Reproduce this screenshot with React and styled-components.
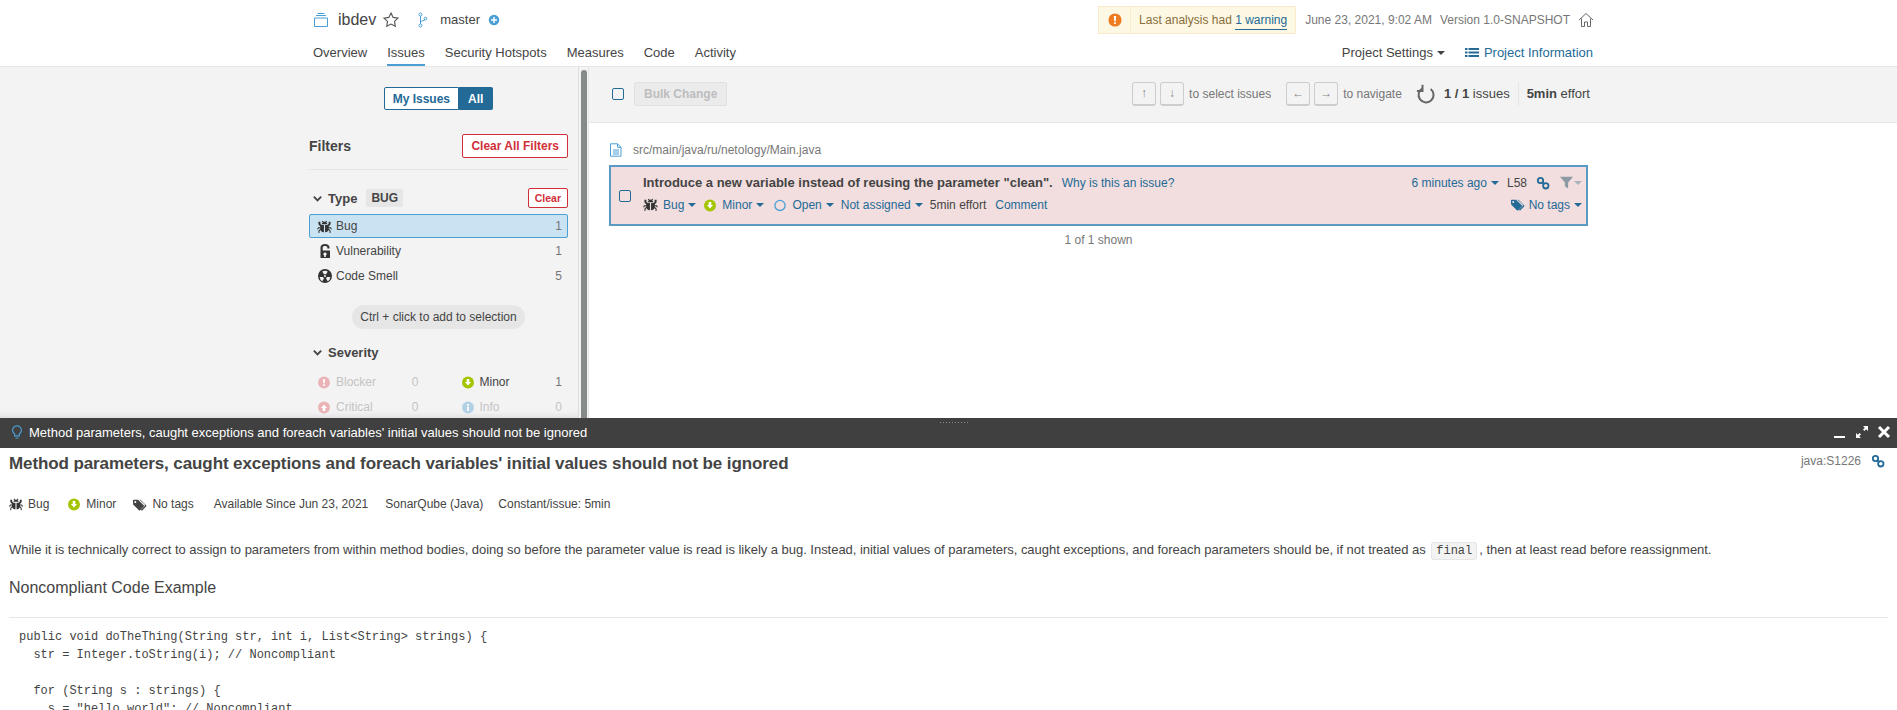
import React from "react";
import styled, {createGlobalStyle} from "styled-components";

const GlobalStyle = createGlobalStyle`
	html, body {
		margin: 0;
		padding: 0;
		background: #fff;
	}
	body {
		font-family: "Liberation Sans", Arial, sans-serif;
		font-size: 12px;
		color: #444;
	}
	* {
		box-sizing: border-box;
	}
`;

const Page = styled.div`
	width: 1897px;
	height: 710px;
	overflow: hidden;
	display: flex;
	flex-direction: column;
`;

/* ---------- top navigation ---------- */
const TopNav = styled.header`
	height: 67px;
	flex: none;
	padding: 0 303px 0 309px;
	background: #fff;
	border-bottom: 1px solid #e6e6e6;
	display: flex;
	flex-direction: column;
`;

const TopRow = styled.div`
	height: 40px;
	display: flex;
	align-items: center;
	justify-content: space-between;
`;

const Breadcrumb = styled.div`
	display: flex;
	align-items: center;
	padding-left: 4px;
`;

const ProjectName = styled.span`
	font-size: 16px;
	margin-left: 9px;
	color: #444;
`;

const StarWrap = styled.span`
	margin-left: 6px;
`;

const BranchWrap = styled.span`
	margin-left: 16px;
`;

const PlusWrap = styled.span`
	margin-left: 8px;
`;

const BranchName = styled.span`
	font-size: 13px;
	margin-left: 8px;
	color: #444;
`;

const Meta = styled.div`
	display: flex;
	align-items: center;
	color: #777;
	font-size: 12px;
`;

const WarningBox = styled.div`
	height: 28px;
	display: flex;
	align-items: center;
	background: #fcf8e3;
	border: 1px solid #faebcc;
	color: #8a6d3b;
	margin-right: 9px;
`;

const WarningIcon = styled.div`
	width: 32px;
	height: 26px;
	display: flex;
	align-items: center;
	justify-content: center;
	border-right: 1px solid #faebcc;
`;

const WarningText = styled.div`
	padding: 0 8px;
	a {
		color: #236a97;
		border-bottom: 1px solid #236a97;
		padding-bottom: 2px;
	}
`;

const Version = styled.span`
	margin-left: 8px;
	margin-right: 8px;
`;

const MenuRow = styled.nav`
	display: flex;
	align-items: flex-start;
	justify-content: space-between;
`;

const Tabs = styled.div`
	display: flex;
	gap: 20px;
	padding-left: 4px;
	font-size: 13px;
`;

const Tab = styled.div`
	height: 27px;
	padding-top: 6px;
	color: #444;
	border-bottom: 2px solid ${(p) => (p.$active ? "#4b9fd5" : "transparent")};
`;

const RightLinks = styled.div`
	display: flex;
	gap: 20px;
	padding-top: 6px;
	font-size: 13px;
	padding-right: 1px;
`;

const SettingsLink = styled.span`
	color: #444;
	display: flex;
	align-items: center;
`;

const InfoLink = styled.span`
	color: #236a97;
	display: flex;
	align-items: center;
	gap: 5px;
`;

const Caret = styled.span`
	display: inline-block;
	width: 0;
	height: 0;
	margin-left: ${(p) => (p.$ml === undefined ? 4 : p.$ml)}px;
	margin-top: 1px;
	border-left: 4px solid transparent;
	border-right: 4px solid transparent;
	border-top: 4px solid ${(p) => p.$color || "currentColor"};
`;

/* ---------- page body ---------- */
const Body = styled.div`
	flex: none;
	height: 351px;
	display: flex;
	overflow: hidden;
`;

const Sidebar = styled.aside`
	width: 578px;
	flex: none;
	padding: 20px 10px 0 309px;
	background: #f3f3f3;
	box-shadow: inset 0 -8px 8px -8px rgba(0, 0, 0, 0.15);
`;

const ScrollTrack = styled.div`
	width: 11px;
	flex: none;
	background: #f3f3f3;
	border-left: 1px solid #ddd;
	padding: 3px 2px 0 2px;
	border-right: 1px solid #e6e6e6;
`;

const ScrollThumb = styled.div`
	width: 6px;
	height: 100%;
	background: #858a8a;
	border-radius: 3px 3px 0 0;
`;

const ToggleRow = styled.div`
	display: flex;
	justify-content: center;
	margin-bottom: 24px;
`;

const ToggleButton = styled.div`
	height: 23px;
	padding: 0 ${(p) => (p.$on ? "9px" : "8px")};
	display: flex;
	align-items: center;
	font-weight: bold;
	font-size: 12px;
	border: 1px solid #236a97;
	border-radius: ${(p) => (p.$on ? "0 2px 2px 0" : "2px 0 0 2px")};
	border-left-width: ${(p) => (p.$on ? 0 : "1px")};
	background: ${(p) => (p.$on ? "#236a97" : "#fff")};
	color: ${(p) => (p.$on ? "#fff" : "#236a97")};
`;

const FiltersHead = styled.div`
	display: flex;
	justify-content: space-between;
	align-items: center;
	padding-bottom: 11px;
	border-bottom: 1px solid #e6e6e6;
	margin-bottom: 18px;
`;

const FiltersTitle = styled.h3`
	margin: 0;
	font-size: 14px;
	font-weight: bold;
	color: #444;
`;

const RedButton = styled.div`
	height: ${(p) => (p.$small ? "20px" : "24px")};
	padding: 0 ${(p) => (p.$small ? "6px" : "8px")};
	display: flex;
	align-items: center;
	border: 1px solid #d02f3a;
	border-radius: 2px;
	color: #d02f3a;
	font-weight: bold;
	font-size: ${(p) => (p.$small ? "10.5px" : "12px")};
	background: #fff;
`;

const FacetHead = styled.div`
	display: flex;
	align-items: center;
	justify-content: space-between;
	height: 20px;
	margin-bottom: ${(p) => p.$mb || 6}px;
`;

const FacetTitle = styled.div`
	display: flex;
	align-items: center;
	gap: 5px;
	font-size: 13px;
	font-weight: bold;
	color: #444;
	padding-left: 3px;
`;

const FacetValue = styled.span`
	background: #e6e6e6;
	border-radius: 2px;
	padding: 2px 5px;
	margin-left: 4px;
	font-size: 12px;
`;

const FacetItem = styled.div`
	height: 24px;
	margin-bottom: 1px;
	padding: 0 5px 0 7px;
	display: flex;
	align-items: center;
	border: 1px solid ${(p) => (p.$active ? "#4b9fd5" : "transparent")};
	background: ${(p) => (p.$active ? "#cae3f2" : "transparent")};
	border-radius: 2px;
	color: ${(p) => (p.$dim ? "#c4c4c4" : "#444")};
`;

const FacetIcon = styled.span`
	width: 15px;
	flex: none;
`;

const FacetLabel = styled.span`
	flex: 1;
	margin-left: 4px;
	margin-top: -1px;
`;

const FacetCount = styled.span`
	color: ${(p) => (p.$dim ? "#c4c4c4" : "#777")};
	margin-top: -1px;
`;

const HintRow = styled.div`
	display: flex;
	justify-content: center;
	margin: 17px 0 13px;
`;

const Hint = styled.div`
	height: 24px;
	padding: 0 8px;
	display: flex;
	align-items: center;
	border-radius: 12px;
	background: #e6e6e6;
	color: #444;
`;

const SeverityGrid = styled.div`
	display: grid;
	grid-template-columns: 1fr 1fr;
	column-gap: 28px;
`;

const Main = styled.main`
	flex: 1;
	min-width: 0;
	background: #fff;
`;

const Toolbar = styled.div`
	height: 56px;
	padding: 0 307px 0 23px;
	background: #f3f3f3;
	border-bottom: 1px solid #e6e6e6;
	display: flex;
	align-items: center;
	justify-content: space-between;
`;

const ToolbarLeft = styled.div`
	display: flex;
	align-items: center;
	gap: 10px;
	padding-bottom: 2px;
`;

const Checkbox = styled.span`
	display: block;
	width: 12px;
	height: 12px;
	flex: none;
	border: 1px solid #236a97;
	border-radius: 2px;
`;

const BulkButton = styled.div`
	height: 24px;
	padding: 0 9px;
	display: flex;
	align-items: center;
	font-weight: bold;
	color: #bdbdbd;
	background: #ebebeb;
	border: 1px solid #e1e1e1;
	border-radius: 2px;
`;

const ToolbarRight = styled.div`
	display: flex;
	align-items: center;
	color: #777;
	padding-bottom: 2px;
`;

const Key = styled.span`
	width: 24px;
	height: 24px;
	margin-right: 4px;
	display: flex;
	align-items: center;
	justify-content: center;
	background: #f3f3f3;
	border: 1px solid #cdcdcd;
	border-bottom-width: 2px;
	border-radius: 3px;
	color: #888;
	font-size: 12px;
`;

const KeyHint = styled.span`
	margin: 0 ${(p) => p.$gap || 16}px 0 1px;
`;

const Paging = styled.div`
	display: flex;
	align-items: center;
	color: #444;
	height: 24px;
	b {
		font-weight: bold;
	}
`;

const PagingCount = styled.span`
	margin-left: 9px;
	padding-right: 8px;
	font-size: 13px;
	line-height: 24px;
	border-right: 1px solid #e6e6e6;
`;

const PagingEffort = styled.span`
	margin-left: 8px;
	font-size: 13px;
`;

const IssueArea = styled.div`
	padding: 16px 309px 0 20px;
`;

const ComponentPath = styled.div`
	display: flex;
	align-items: center;
	gap: 10px;
	height: 22px;
	color: #777;
	font-size: 12px;
`;

const IssueBox = styled.div`
	margin-top: 4px;
	height: 61px;
	padding: 0 4px 0 8px;
	display: flex;
	align-items: center;
	gap: 12px;
	background: #f2dede;
	border: 2px solid #5a9ac4;
`;

const IssueCol = styled.div`
	flex: 1;
	display: flex;
	flex-direction: column;
	gap: 5px;
	padding-bottom: 4px;
`;

const IssueLine = styled.div`
	display: flex;
	align-items: center;
	justify-content: space-between;
	height: 17px;
`;

const LineGroup = styled.div`
	display: flex;
	align-items: center;
`;

const IssueMessage = styled.span`
	font-weight: bold;
	font-size: 13px;
	color: #444;
	margin-right: 9px;
`;

const BlueText = styled.span`
	color: #236a97;
	display: inline-flex;
	align-items: center;
	margin-left: ${(p) => p.$ml || 0}px;
	margin-right: ${(p) => p.$mr || 0}px;
`;

const DarkText = styled.span`
	color: #444;
	margin-left: ${(p) => p.$ml || 0}px;
	margin-right: ${(p) => p.$mr || 0}px;
`;

const FilterWrap = styled.span`
	margin-left: 10px;
`;

const Shown = styled.div`
	text-align: center;
	margin-top: 7px;
	color: #777;
`;

/* ---------- rule panel at the bottom ---------- */
const Workspace = styled.section`
	flex: 1;
	min-height: 0;
	position: relative;
	background: #fff;
	display: flex;
	flex-direction: column;
`;

const WorkspaceBar = styled.div`
	height: 30px;
	flex: none;
	padding: 0 6px 2px 10px;
	background: #404040;
	color: #fff;
	display: flex;
	align-items: center;
	justify-content: space-between;
	font-size: 13px;
`;

const BarTitle = styled.div`
	display: flex;
	align-items: center;
	gap: 5px;
`;

const BarActions = styled.div`
	display: flex;
	align-items: center;
	gap: 8px;
`;

const Grip = styled.div`
	position: absolute;
	top: 3px;
	left: 939px;
	width: 30px;
	height: 4px;
	background-image: radial-gradient(#8d8d8d 1px, transparent 1px);
	background-size: 3px 3px;
`;

const RuleBody = styled.div`
	flex: 1;
	min-height: 0;
	overflow: hidden;
	padding: 6px 9px 0 9px;
`;

const RuleHead = styled.div`
	display: flex;
	justify-content: space-between;
	align-items: flex-start;
`;

const RuleTitle = styled.h1`
	margin: 0;
	font-size: 17px;
	letter-spacing: -0.1px;
	line-height: 20px;
	font-weight: bold;
	color: #444;
`;

const RuleKey = styled.div`
	display: flex;
	align-items: center;
	gap: 10px;
	color: #777;
	padding-right: 3px;
`;

const RuleMeta = styled.div`
	display: flex;
	align-items: center;
	margin-top: 22px;
	height: 16px;
	color: #444;
`;

const MetaItem = styled.span`
	display: flex;
	align-items: center;
	gap: 5px;
	margin-right: ${(p) => p.$gap || 17}px;
`;

const RuleText = styled.p`
	margin: 29px 0 0;
	font-size: 13px;
	letter-spacing: -0.03px;
	line-height: 18px;
	color: #444;
	code {
		font-family: "Liberation Mono", monospace;
		font-size: 12px;
		letter-spacing: 0;
		background: #f3f3f3;
		border: 1px solid #e6e6e6;
		border-radius: 3px;
		padding: 1px 4px;
		margin: 0 2px;
	}
`;

const RuleHeading = styled.h2`
	margin: 18px 0 0;
	padding-bottom: 19px;
	font-size: 16px;
	line-height: 20px;
	font-weight: normal;
	color: #444;
	border-bottom: 1px solid #e6e6e6;
`;

const CodeBlock = styled.pre`
	margin: 0;
	padding: 10px 10px 0;
	font-family: "Liberation Mono", monospace;
	font-size: 12px;
	line-height: 18px;
	color: #444;
`;

/* ---------- drawings ---------- */
const Icon = ({size = 16, color = "currentColor", children, vb = "0 0 16 16"}) => (
	<svg width={size} height={size} viewBox={vb} fill={color} style={{flex: "none", display: "block"}}>
		{children}
	</svg>
);

const BugIcon = ({size}) => (
	<Icon size={size} color="#333">
		<path d="M6 1.800 7.200 3h1.600L10 1.800l.8.7-1 1.100c.7.400 1.200 1 1.300 1.900H4.900c.1-.9.6-1.500 1.300-1.900l-1-1.100zM2.500 3h1.100v2.200L5 6.500h2.400V14H7c-1.600 0-3-1-3.300-2.300L2.600 13v2h-1.100v-2.400l2-2.300V9.800H1.900l-.8 1.500-1-.6 1.100-2h2.300V7.900L1.500 5.700V3h1zM13.500 3h1v2.700l-2 2.200v.8h2.300l1.100 2-1 .6-.8-1.500h-1.600v.5l2 2.300V15h-1.100v-2l-1.100-1.300C12 13 10.600 14 9 14h-.4V6.500H11l1.400-1.300V3z" />
	</Icon>
);

const LockIcon = () => (
	<Icon size={16} color="#333">
		<path
			fillRule="evenodd"
			d="M3.500 7.500V4.500C3.500 2.300 5.300 1 8 1s4.500 1.300 4.500 3.500V5.500h-2.200v-1c0-1-.9-1.500-2.300-1.500s-2.300.5-2.300 1.500v3h7.300V15H3.500zM8 9.500a1.600 1.600 0 0 0-.8 3V14h1.600v-1.500a1.600 1.600 0 0 0-.8-3z"
		/>
	</Icon>
);

const SmellIcon = () => (
	<Icon size={16} color="#333">
		<path
			fillRule="evenodd"
			d="M8 1a7 7 0 1 1 0 14A7 7 0 0 1 8 1zM5.300 3.500 7 6.400a1.800 1.800 0 0 1 2 0l1.700-2.900a5.300 5.300 0 0 0-5.400 0zM2.700 8.900h3.400c.1.600.4 1.100.9 1.400l-1.700 3a5.300 5.300 0 0 1-2.600-4.400zm10.600 0a5.300 5.300 0 0 1-2.600 4.400L9 10.300c.5-.3.800-.8.900-1.400zM8 7a1 1 0 1 0 0 2 1 1 0 0 0 0-2z"
		/>
	</Icon>
);

const SeverityIcon = ({kind, size = 14}) => {
	const colors = {
		minor: "#a4c400",
		blocker: "#eab3b8",
		critical: "#eab3b8",
		info: "#b2d0e6",
	};
	return (
		<Icon size={size} color={colors[kind]}>
			<circle cx="8" cy="8.500" r="6.800" />
			{kind === "minor" && <path d="M6.500 4.500h3V8h2L8 12 4.500 8h2z" fill="#fff" />}
			{kind === "critical" && <path d="M6.500 12.500h3V9h2L8 5 4.500 9h2z" fill="#fff" />}
			{kind === "blocker" && <path d="M7 4.500h2v5H7zM7 10.500h2v2H7z" fill="#fff" />}
			{kind === "info" && <path d="M7 7.500h2v5H7zM7 4.500h2v2H7z" fill="#fff" />}
		</Icon>
	);
};

const ChevronIcon = () => (
	<Icon size={11} color="none" vb="0 0 12 12">
		<path d="M2 4l4 4 4-4" stroke="#444" strokeWidth="2" fill="none" />
	</Icon>
);

const LinkIcon = ({color = "#236a97"}) => (
	<Icon size={14} color="none" vb="0 0 14 14">
		<circle cx="4.500" cy="4.500" r="2.700" stroke={color} strokeWidth="1.800" fill="none" />
		<circle cx="9.800" cy="9.800" r="2.700" stroke={color} strokeWidth="1.800" fill="none" />
		<path d="M6 6l2.300 2.300" stroke={color} strokeWidth="1.800" />
	</Icon>
);

const TagsIcon = ({color = "#236a97"}) => (
	<Icon size={15} color={color}>
		<path d="M1 3.500C1 3 1.400 2.800 2 2.800h4.500l6 6c.4.400.4 1 0 1.400l-3.800 3.800c-.4.400-1 .4-1.400 0L1.200 8zM3.500 4.200a1.100 1.100 0 1 0 0 2.200 1.100 1.100 0 0 0 0-2.200z" fillRule="evenodd" />
		<path d="M8 2.800h1l6 6c.4.400.4 1 0 1.400l-3.800 3.800c-.4.400-1 .4-1.400 0l-.3-.3 3.800-3.800c.6-.7.6-1.500 0-2.100z" />
	</Icon>
);

const FileIcon = () => (
	<Icon size={14} color="none" vb="0 0 14 14">
		<path d="M1.500.8h7l3.500 3.500v8.900h-10.500zM8.500.8v3.500H12M4 7h6M4 9h6M4 11h6" stroke="#4b9fd5" strokeWidth="1" fill="none" />
	</Icon>
);

const ProjectIcon = () => (
	<Icon size={16} color="none">
		<path d="M1.500 6h13v8.500h-13zM3 3.500h10M4.500 1.500h7" stroke="#4b9fd5" strokeWidth="1" fill="none" />
	</Icon>
);

const BranchIcon = () => (
	<Icon size={16} color="none">
		<circle cx="4.500" cy="2.500" r="1.500" stroke="#4b9fd5" fill="none" />
		<circle cx="4.500" cy="13.500" r="1.500" stroke="#4b9fd5" fill="none" />
		<circle cx="9.500" cy="6.500" r="1.300" stroke="#4b9fd5" fill="none" />
		<path d="M4.500 4v8M4.500 10.500c0-2 4-1.500 4.500-2.800" stroke="#4b9fd5" fill="none" />
	</Icon>
);

const FilterIcon = () => (
	<Icon size={13} color="#8c9aa3">
		<path d="M0 1h16L10 8v7.500L6 12.500V8z" />
	</Icon>
);

function FacetRow({icon, label, count, active, dim}) {
	return (
		<FacetItem $active={active} $dim={dim}>
			<FacetIcon>{icon}</FacetIcon>
			<FacetLabel>{label}</FacetLabel>
			<FacetCount $dim={dim}>{count}</FacetCount>
		</FacetItem>
	);
}

export default function App() {
	return (
		<>
			<GlobalStyle />
			<Page>
				<TopNav>
					<TopRow>
						<Breadcrumb>
							<ProjectIcon />
							<ProjectName>ibdev</ProjectName>
							<StarWrap>
								<Icon size={18} color="none">
									<path d="M8 1.800l1.900 3.900 4.300.6-3.100 3 .7 4.300L8 11.600l-3.800 2 .7-4.300-3.100-3 4.300-.6z" stroke="#555" strokeWidth="1" fill="none" />
								</Icon>
							</StarWrap>
							<BranchWrap>
								<BranchIcon />
							</BranchWrap>
							<BranchName>master</BranchName>
							<PlusWrap>
								<Icon size={12} color="#4b9fd5">
									<circle cx="8" cy="8" r="7" />
									<path d="M7 4h2v3h3v2H9v3H7V9H4V7h3z" fill="#fff" />
								</Icon>
							</PlusWrap>
						</Breadcrumb>
						<Meta>
							<WarningBox>
								<WarningIcon>
									<Icon size={14} color="#ed7d20">
										<circle cx="8" cy="8" r="7.500" />
										<path d="M6.700 3.500h2.600L9 9.500H7zM7 10.500h2v2H7z" fill="#fff" />
									</Icon>
								</WarningIcon>
								<WarningText>
									Last analysis had <a>1 warning</a>
								</WarningText>
							</WarningBox>
							<span>June 23, 2021, 9:02 AM</span>
							<Version>Version 1.0-SNAPSHOT</Version>
							<Icon size={16} color="none">
								<path d="M1 8l7-6.500L15 8M3.500 6.500V14.500H6.500V10h3v4.500h3V6.500" stroke="#666" strokeWidth="1" fill="none" />
							</Icon>
						</Meta>
					</TopRow>
					<MenuRow>
						<Tabs>
							<Tab>Overview</Tab>
							<Tab $active>Issues</Tab>
							<Tab>Security Hotspots</Tab>
							<Tab>Measures</Tab>
							<Tab>Code</Tab>
							<Tab>Activity</Tab>
						</Tabs>
						<RightLinks>
							<SettingsLink>
								Project Settings
								<Caret />
							</SettingsLink>
							<InfoLink>
								<Icon size={14} color="#236a97" vb="0 0 14 14">
									<path d="M0 2h2.500v2H0zM3.500 2H14v2H3.500zM0 5.500h2.500v2H0zM3.500 5.500H14v2H3.500zM0 9h2.500v2H0zM3.500 9H14v2H3.500z" />
								</Icon>
								Project Information
							</InfoLink>
						</RightLinks>
					</MenuRow>
				</TopNav>
				<Body>
					<Sidebar>
						<ToggleRow>
							<ToggleButton>My Issues</ToggleButton>
							<ToggleButton $on>All</ToggleButton>
						</ToggleRow>
						<FiltersHead>
							<FiltersTitle>Filters</FiltersTitle>
							<RedButton>Clear All Filters</RedButton>
						</FiltersHead>
						<FacetHead>
							<FacetTitle>
								<ChevronIcon />
								Type
								<FacetValue>BUG</FacetValue>
							</FacetTitle>
							<RedButton $small>Clear</RedButton>
						</FacetHead>
						<FacetRow icon={<BugIcon size={15} />} label="Bug" count="1" active />
						<FacetRow icon={<LockIcon />} label="Vulnerability" count="1" />
						<FacetRow icon={<SmellIcon />} label="Code Smell" count="5" />
						<HintRow>
							<Hint>Ctrl + click to add to selection</Hint>
						</HintRow>
						<FacetHead $mb={8}>
							<FacetTitle>
								<ChevronIcon />
								Severity
							</FacetTitle>
						</FacetHead>
						<SeverityGrid>
							<FacetRow icon={<SeverityIcon kind="blocker" />} label="Blocker" count="0" dim />
							<FacetRow icon={<SeverityIcon kind="minor" />} label="Minor" count="1" />
							<FacetRow icon={<SeverityIcon kind="critical" />} label="Critical" count="0" dim />
							<FacetRow icon={<SeverityIcon kind="info" />} label="Info" count="0" dim />
						</SeverityGrid>
					</Sidebar>
					<ScrollTrack>
						<ScrollThumb />
					</ScrollTrack>
					<Main>
						<Toolbar>
							<ToolbarLeft>
								<Checkbox />
								<BulkButton>Bulk Change</BulkButton>
							</ToolbarLeft>
							<ToolbarRight>
								<Key>↑</Key>
								<Key>↓</Key>
								<KeyHint $gap={15}>to select issues</KeyHint>
								<Key>←</Key>
								<Key>→</Key>
								<KeyHint $gap={13}>to navigate</KeyHint>
								<Paging>
									<Icon size={20} color="none">
										<path d="M6 3.500A6 6 0 1 0 12.500 4M6 .5V5.500H1.500" stroke="#666" strokeWidth="1.600" fill="none" />
									</Icon>
									<PagingCount>
										<b>1 / 1</b> issues
									</PagingCount>
									<PagingEffort>
										<b>5min</b> effort
									</PagingEffort>
								</Paging>
							</ToolbarRight>
						</Toolbar>
						<IssueArea>
							<ComponentPath>
								<FileIcon />
								src/main/java/ru/netology/Main.java
							</ComponentPath>
							<IssueBox>
								<Checkbox />
								<IssueCol>
									<IssueLine>
										<LineGroup>
											<IssueMessage>Introduce a new variable instead of reusing the parameter "clean".</IssueMessage>
											<BlueText>Why is this an issue?</BlueText>
										</LineGroup>
										<LineGroup>
											<BlueText $mr={8}>
												6 minutes ago
												<Caret />
											</BlueText>
											<DarkText $mr={9}>L58</DarkText>
											<LinkIcon />
											<FilterWrap>
												<FilterIcon />
											</FilterWrap>
											<Caret $ml={1} $color="#a9b4bb" />
										</LineGroup>
									</IssueLine>
									<IssueLine>
										<LineGroup>
											<BugIcon size={15} />
											<BlueText $ml={5} $mr={7}>
												Bug
												<Caret />
											</BlueText>
											<SeverityIcon kind="minor" />
											<BlueText $ml={5} $mr={9}>
												Minor
												<Caret />
											</BlueText>
											<Icon size={14} color="none">
												<circle cx="8" cy="8.500" r="5.800" stroke="#4b9fd5" strokeWidth="1.500" fill="none" />
											</Icon>
											<BlueText $ml={5} $mr={7}>
												Open
												<Caret />
											</BlueText>
											<BlueText $mr={7}>
												Not assigned
												<Caret />
											</BlueText>
											<DarkText $mr={9}>5min effort</DarkText>
											<BlueText>Comment</BlueText>
										</LineGroup>
										<LineGroup>
											<TagsIcon />
											<BlueText $ml={4}>
												No tags
												<Caret />
											</BlueText>
										</LineGroup>
									</IssueLine>
								</IssueCol>
							</IssueBox>
							<Shown>1 of 1 shown</Shown>
						</IssueArea>
					</Main>
				</Body>
				<Workspace>
					<Grip />
					<WorkspaceBar>
						<BarTitle>
							<Icon size={14} color="none">
								<path d="M8 .8a5 5 0 0 1 2.700 9.200V12.500H5.300V10A5 5 0 0 1 8 .8zM6.300 14.800h3.400" stroke="#4b9fd5" strokeWidth="1.300" fill="none" />
							</Icon>
							Method parameters, caught exceptions and foreach variables' initial values should not be ignored
						</BarTitle>
						<BarActions>
							<Icon size={14} color="#fff" vb="0 0 14 14">
								<path d="M1 11h11v2H1z" />
							</Icon>
							<Icon size={14} color="#fff" vb="0 0 14 14">
								<path d="M8 1h5v5l-1.800-1.800-1.800 1.800-1.400-1.400 1.800-1.800zM6 13H1V8l1.800 1.800 1.800-1.800 1.400 1.400-1.800 1.800z" />
							</Icon>
							<Icon size={14} color="none" vb="0 0 14 14">
								<path d="M2 2l10 10M12 2L2 12" stroke="#fff" strokeWidth="3" fill="none" />
							</Icon>
						</BarActions>
					</WorkspaceBar>
					<RuleBody>
						<RuleHead>
							<RuleTitle>Method parameters, caught exceptions and foreach variables' initial values should not be ignored</RuleTitle>
							<RuleKey>
								java:S1226
								<LinkIcon />
							</RuleKey>
						</RuleHead>
						<RuleMeta>
							<MetaItem $gap={18}>
								<BugIcon size={14} />
								Bug
							</MetaItem>
							<MetaItem $gap={16}>
								<SeverityIcon kind="minor" />
								Minor
							</MetaItem>
							<MetaItem $gap={20}>
								<TagsIcon color="#444" />
								No tags
							</MetaItem>
							<MetaItem>Available Since Jun 23, 2021</MetaItem>
							<MetaItem $gap={15}>SonarQube (Java)</MetaItem>
							<MetaItem>Constant/issue: 5min</MetaItem>
						</RuleMeta>
						<RuleText>
							While it is technically correct to assign to parameters from within method bodies, doing so before the parameter value is read is likely a bug. Instead, initial values of parameters, caught exceptions, and foreach parameters should be, if not treated as <code>final</code>, then at least read before reassignment.
						</RuleText>
						<RuleHeading>Noncompliant Code Example</RuleHeading>
						<CodeBlock>{`public void doTheThing(String str, int i, List<String> strings) {
  str = Integer.toString(i); // Noncompliant

  for (String s : strings) {
    s = "hello world"; // Noncompliant
  }
}`}</CodeBlock>
					</RuleBody>
				</Workspace>
			</Page>
		</>
	);
}
